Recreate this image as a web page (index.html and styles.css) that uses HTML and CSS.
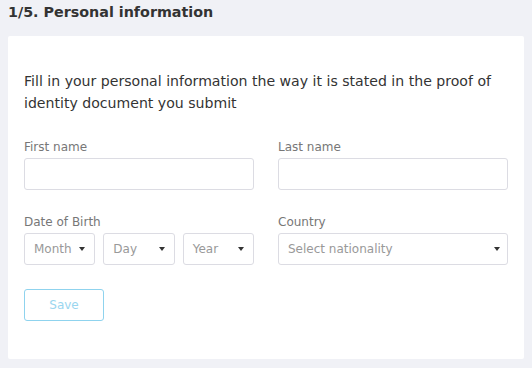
FILE: index.html
```html
<!DOCTYPE html>
<html lang="en">
<head>
    <meta charset="UTF-8">
    <title>Personal information</title>
    <link rel="stylesheet" href="styles.css">
</head>
<body>
    <h1 class="step-title">1/5. Personal information</h1>
    <div class="card">
        <p class="intro">Fill in your personal information the way it is stated in the proof of identity document you submit</p>
        <div class="form-grid">
            <div class="field">
                <label>First name</label>
                <input type="text" class="text-input">
            </div>
            <div class="field">
                <label>Last name</label>
                <input type="text" class="text-input">
            </div>
            <div class="field">
                <label>Date of Birth</label>
                <div class="dob-row">
                    <div class="select-box"><span>Month</span><span class="caret"></span></div>
                    <div class="select-box"><span>Day</span><span class="caret"></span></div>
                    <div class="select-box"><span>Year</span><span class="caret"></span></div>
                </div>
            </div>
            <div class="field">
                <label>Country</label>
                <div class="select-box wide"><span>Select nationality</span><span class="caret"></span></div>
            </div>
        </div>
        <button class="save-btn">Save</button>
    </div>
</body>
</html>
```

FILE: styles.css
```css
body {
    margin: 0;
    padding: 0 8px 10px;
    background: #f0f1f6;
    font-family: 'DejaVu Sans', Verdana, sans-serif;
    color: #333;
}

.step-title {
    margin: 0;
    padding: 4px 0 0;
    height: 32px;
    font-size: 14.3px;
    font-weight: bold;
    color: #333;
}

.card {
    background: #fff;
    padding: 34px 16px 38px;
    border-radius: 2px;
}

.intro {
    margin: 0 0 26px;
    font-size: 14.1px;
    line-height: 22px;
    color: #333;
}

.form-grid {
    display: grid;
    grid-template-columns: 1fr 1fr;
    column-gap: 24px;
    row-gap: 25px;
}

.field label {
    display: block;
    font-size: 12px;
    color: #777;
    margin-bottom: 4px;
}

.text-input {
    display: block;
    box-sizing: border-box;
    width: 100%;
    height: 32px;
    border: 1px solid #dcdce3;
    border-radius: 3px;
    background: #fff;
}

.dob-row {
    display: grid;
    grid-template-columns: 1fr 1fr 1fr;
    gap: 8px;
}

.select-box {
    box-sizing: border-box;
    height: 32px;
    border: 1px solid #dcdce3;
    border-radius: 3px;
    display: flex;
    align-items: center;
    justify-content: space-between;
    padding: 0 9px;
    font-size: 12px;
    color: #999;
}

.select-box.wide {
    padding-right: 7px;
}

.caret {
    width: 0;
    height: 0;
    border-left: 3px solid transparent;
    border-right: 3px solid transparent;
    border-top: 4px solid #333;
}

.save-btn {
    display: block;
    margin-top: 24px;
    width: 80px;
    height: 32px;
    border: 1px solid #8fd3ee;
    border-radius: 3px;
    background: #fff;
    color: #9ad6ef;
    font-family: 'DejaVu Sans', Verdana, sans-serif;
    font-size: 12px;
}
```
